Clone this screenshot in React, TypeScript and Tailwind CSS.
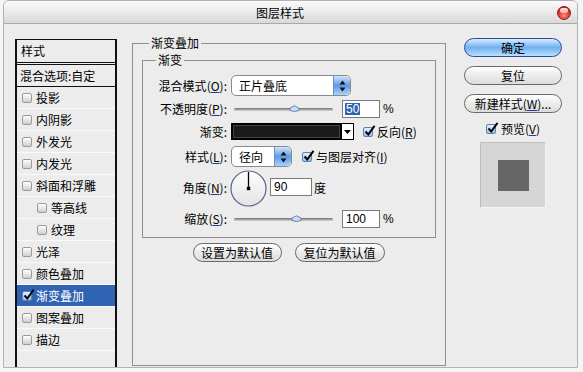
import React from "react";

const U = ({ c }: { c: string }) => (
  <span>
    (<span className="underline decoration-[#1d3f9a]">{c}</span>)
  </span>
);

const Check = ({ checked }: { checked?: boolean }) => (
  <span
    className={`relative inline-block w-[10px] h-[10px] shrink-0 rounded-[2px] border ${
      checked
        ? "border-[#5f7fb0] bg-gradient-to-b from-[#e4f0ff] to-[#9cc0ec]"
        : "border-[#9a9a9a] bg-gradient-to-b from-[#ffffff] to-[#cfcfcf]"
    }`}
  >
    {checked && (
      <svg className="absolute left-[0px] top-[-3px]" width="12" height="12" viewBox="0 0 12 12">
        <path d="M1.5 6.5 L4.3 9.5 L10.5 0.8" stroke="#000" strokeWidth="2" fill="none" />
      </svg>
    )}
  </span>
);

const Slider = ({ pos }: { pos: number }) => (
  <div className="relative w-[99px] h-[10px] flex items-center">
    <div className="w-full h-[3px] rounded-full bg-gradient-to-b from-[#6f6f6f] to-[#d8d8d8]" />
    <svg className="absolute top-[1px]" style={{ left: pos }} width="11" height="8" viewBox="0 0 11 8">
      <path d="M1 3 L5.5 0.8 L10 3 L10 5.5 Q5.5 7.5 1 5.5 Z" fill="#c9dcf4" stroke="#5c7cab" strokeWidth="0.9" />
    </svg>
  </div>
);

const Stepper = () => (
  <span className="flex h-full w-[17px] flex-col items-center justify-center rounded-r-[5px] border-l border-[#6c8cc4] bg-gradient-to-b from-[#cfe4fb] via-[#5d9be8] to-[#a9d2fa]">
    <svg width="7" height="12" viewBox="0 0 7 12">
      <path d="M3.5 0.5 L6.5 4.5 L0.5 4.5 Z" fill="#111" />
      <path d="M3.5 11.5 L6.5 7.5 L0.5 7.5 Z" fill="#111" />
    </svg>
  </span>
);

const Select = ({ w, text }: { w: string; text: string }) => (
  <div className={`flex h-[21px] ${w} overflow-hidden rounded-[5px] border border-[#8a8a8a] bg-white`}>
    <span className="flex-1 pl-[7px] text-[12px] leading-[19px] text-black">{text}</span>
    <Stepper />
  </div>
);

const Input = ({ w, value, selected }: { w: string; value: string; selected?: boolean }) => (
  <div className={`flex h-[18px] ${w} items-center border border-[#7a7a7a] bg-white pl-[2px]`}>
    <span
      className={`font-['Liberation_Sans',sans-serif] text-[12px] leading-[12px] ${
        selected ? "bg-[#2f63b4] px-[1px] text-white" : "pl-[1px] text-black"
      }`}
    >
      {value}
    </span>
  </div>
);

const AquaButton = ({ children, w, blue }: { children: React.ReactNode; w: string; blue?: boolean }) => (
  <div
    className={`flex h-[19px] ${w} items-center justify-center rounded-full border text-[12px] leading-[17px] text-black ${
      blue
        ? "border-[#2b4a9c] bg-gradient-to-b from-[#d8ecfd] via-[#6fb0f0] to-[#b9e2ff]"
        : "border-[#6a6a6a] bg-gradient-to-b from-[#ffffff] via-[#ececec] to-[#dcdcdc]"
    }`}
  >
    {children}
  </div>
);

const Label = ({ children }: { children: React.ReactNode }) => (
  <div className="w-[85px] shrink-0 pr-[1px] text-right text-[12px] leading-[14px] text-black">{children}</div>
);

const listItems: { t: string; indent?: boolean; sel?: boolean }[] = [
  { t: "投影" },
  { t: "内阴影" },
  { t: "外发光" },
  { t: "内发光" },
  { t: "斜面和浮雕" },
  { t: "等高线", indent: true },
  { t: "纹理", indent: true },
  { t: "光泽" },
  { t: "颜色叠加" },
  { t: "渐变叠加", sel: true },
  { t: "图案叠加" },
  { t: "描边" },
];

export default function App() {
  return (
    <div className="h-[372px] w-[583px] overflow-hidden bg-[#f5f5f5] font-['Noto_Sans_CJK_SC','Noto_Sans',sans-serif] text-black">
      <div className="ml-[3px] flex h-[368px] w-[575px] flex-col rounded-t-[6px] border border-[#b2b2b2] bg-[#ececec]">
        {/* title bar */}
        <div className="flex h-[23px] shrink-0 items-center rounded-t-[5px] border-b border-[#a9a9a9] bg-gradient-to-b from-[#fbfbfb] to-[#d9d9d9]">
          <span className="ml-[252px] text-[12px] leading-[13px] text-black">图层样式</span>
          <div className="flex-1" />
          <div className="relative mr-[6px] mt-[2px] h-[14px] w-[14px] rounded-full border border-[#8a1d16] bg-[radial-gradient(circle_at_50%_70%,#ff8a7c_0%,#e0392c_50%,#a3160f_100%)]">
            <div className="mx-auto mt-[1px] h-[5px] w-[8px] rounded-full bg-gradient-to-b from-[#ffffff] to-[#ffb9b2] opacity-90" />
          </div>
        </div>

        {/* body */}
        <div className="flex flex-1 items-start">
          {/* styles list */}
          <div className="ml-[11px] mt-[15px] flex w-[102px] self-stretch flex-col border-x-2 border-t border-[#111]">
            <div className="flex h-[25px] items-center border-b-[3px] border-double border-[#111] pl-[4px] text-[12px]">
              样式
            </div>
            <div className="flex h-[22px] items-center border-b border-[#111] pl-[3px] text-[12px]">混合选项:自定</div>
            {listItems.map((it) => (
              <div
                key={it.t}
                className={`flex h-[22px] items-center gap-[4px] border-b border-[#fafafa] text-[12px] ${
                  it.indent ? "pl-[20px]" : "pl-[5px]"
                } ${it.sel ? "bg-[#3064b3] text-white" : ""}`}
              >
                <Check checked={it.sel} />
                <span className="leading-[14px]">{it.t}</span>
              </div>
            ))}
          </div>

          {/* main group */}
          <fieldset className="ml-[15px] mt-[12px] h-[330px] w-[314px] border border-[#8f8f8f] p-0">
            <legend className="ml-[16px] px-[2px] text-[12px] leading-[14px]">渐变叠加</legend>
            <div className="px-[9px] pt-[3px]">
              <fieldset className="border border-[#8f8f8f] p-0">
                <legend className="ml-[13px] px-[2px] text-[12px] leading-[14px]">渐变</legend>
                <div className="flex flex-col pb-[9px] pt-[8px]">
                  <div className="flex h-[21px] items-center">
                    <Label>
                      混合模式<U c="O" />:
                    </Label>
                    <div className="ml-[3px]">
                      <Select w="w-[120px]" text="正片叠底" />
                    </div>
                  </div>
                  <div className="mt-[4px] flex h-[18px] items-center">
                    <Label>
                      不透明度<U c="P" />:
                    </Label>
                    <div className="ml-[6px]">
                      <Slider pos={55} />
                    </div>
                    <div className="ml-[9px]">
                      <Input w="w-[38px]" value="50" selected />
                    </div>
                    <span className="ml-[3px] font-['Liberation_Sans',sans-serif] text-[12px]">%</span>
                  </div>
                  <div className="mt-[5px] flex h-[17px] items-center">
                    <Label>渐变:</Label>
                    <div className="ml-[3px] flex h-[17px]">
                      <div className="w-[111px] border-2 border-black bg-[#1b1b1b] shadow-[inset_0_0_0_1px_#444]" />
                      <div className="flex w-[12px] items-center justify-center border border-l-0 border-black bg-white">
                        <svg width="7" height="4" viewBox="0 0 7 4">
                          <path d="M0 0 L7 0 L3.5 4 Z" fill="#000" />
                        </svg>
                      </div>
                    </div>
                    <div className="ml-[9px] flex items-center gap-[4px]">
                      <Check checked />
                      <span className="text-[12px] leading-[14px]">
                        反向<U c="R" />
                      </span>
                    </div>
                  </div>
                  <div className="mt-[6px] flex h-[21px] items-center">
                    <Label>
                      样式<U c="L" />:
                    </Label>
                    <div className="ml-[3px]">
                      <Select w="w-[61px]" text="径向" />
                    </div>
                    <div className="ml-[10px] flex items-center gap-[4px]">
                      <Check checked />
                      <span className="text-[12px] leading-[14px]">
                        与图层对齐<U c="I" />
                      </span>
                    </div>
                  </div>
                  <div className="mt-[3px] flex h-[36px] items-center">
                    <Label>
                      角度<U c="N" />:
                    </Label>
                    <svg className="ml-[2px]" width="37" height="37" viewBox="0 0 37 37">
                      <defs>
                        <linearGradient id="dial" x1="0" y1="0" x2="0" y2="1">
                          <stop offset="0" stopColor="#ffffff" />
                          <stop offset="1" stopColor="#e2e2e2" />
                        </linearGradient>
                      </defs>
                      <circle cx="18.5" cy="18.5" r="17.5" fill="url(#dial)" stroke="#55648f" strokeWidth="1.2" />
                      <line x1="18.5" y1="18.5" x2="18.5" y2="2" stroke="#000" strokeWidth="1.3" />
                      <rect x="16.8" y="16.8" width="3.4" height="3.4" fill="#000" />
                    </svg>
                    <div className="ml-[3px] mt-[-2px]">
                      <Input w="w-[42px]" value="90" />
                    </div>
                    <span className="ml-[2px] text-[12px] leading-[14px]">度</span>
                  </div>
                  <div className="mt-[4px] flex h-[18px] items-center">
                    <Label>
                      缩放<U c="S" />:
                    </Label>
                    <div className="ml-[6px]">
                      <Slider pos={57} />
                    </div>
                    <div className="ml-[9px]">
                      <Input w="w-[38px]" value="100" />
                    </div>
                    <span className="ml-[3px] font-['Liberation_Sans',sans-serif] text-[12px]">%</span>
                  </div>
                </div>
              </fieldset>
              <div className="mt-[5px] flex justify-center gap-[13px] pr-[1px]">
                <AquaButton w="w-[89px]">设置为默认值</AquaButton>
                <AquaButton w="w-[90px]">复位为默认值</AquaButton>
              </div>
            </div>
          </fieldset>

          {/* right column */}
          <div className="ml-[18px] mt-[14px] flex w-[98px] flex-col items-center">
            <AquaButton w="w-[98px]" blue>
              确定
            </AquaButton>
            <div className="mt-[9px]">
              <AquaButton w="w-[98px]">复位</AquaButton>
            </div>
            <div className="mt-[9px]">
              <AquaButton w="w-[98px]">
                新建样式<U c="W" />...
              </AquaButton>
            </div>
            <div className="mt-[9px] flex h-[14px] items-center gap-[5px]">
              <Check checked />
              <span className="text-[12px] leading-[14px]">
                预览<U c="V" />
              </span>
            </div>
            <div className="mt-[6px] flex h-[66px] w-[66px] items-center justify-center border border-t-[#bdbdbd] border-l-[#bdbdbd] border-r-[#f4f4f4] border-b-[#f4f4f4] bg-[#d6d6d6]">
              <div className="h-[31px] w-[31px] bg-[#666666]" />
            </div>
          </div>
        </div>
      </div>
    </div>
  );
}
